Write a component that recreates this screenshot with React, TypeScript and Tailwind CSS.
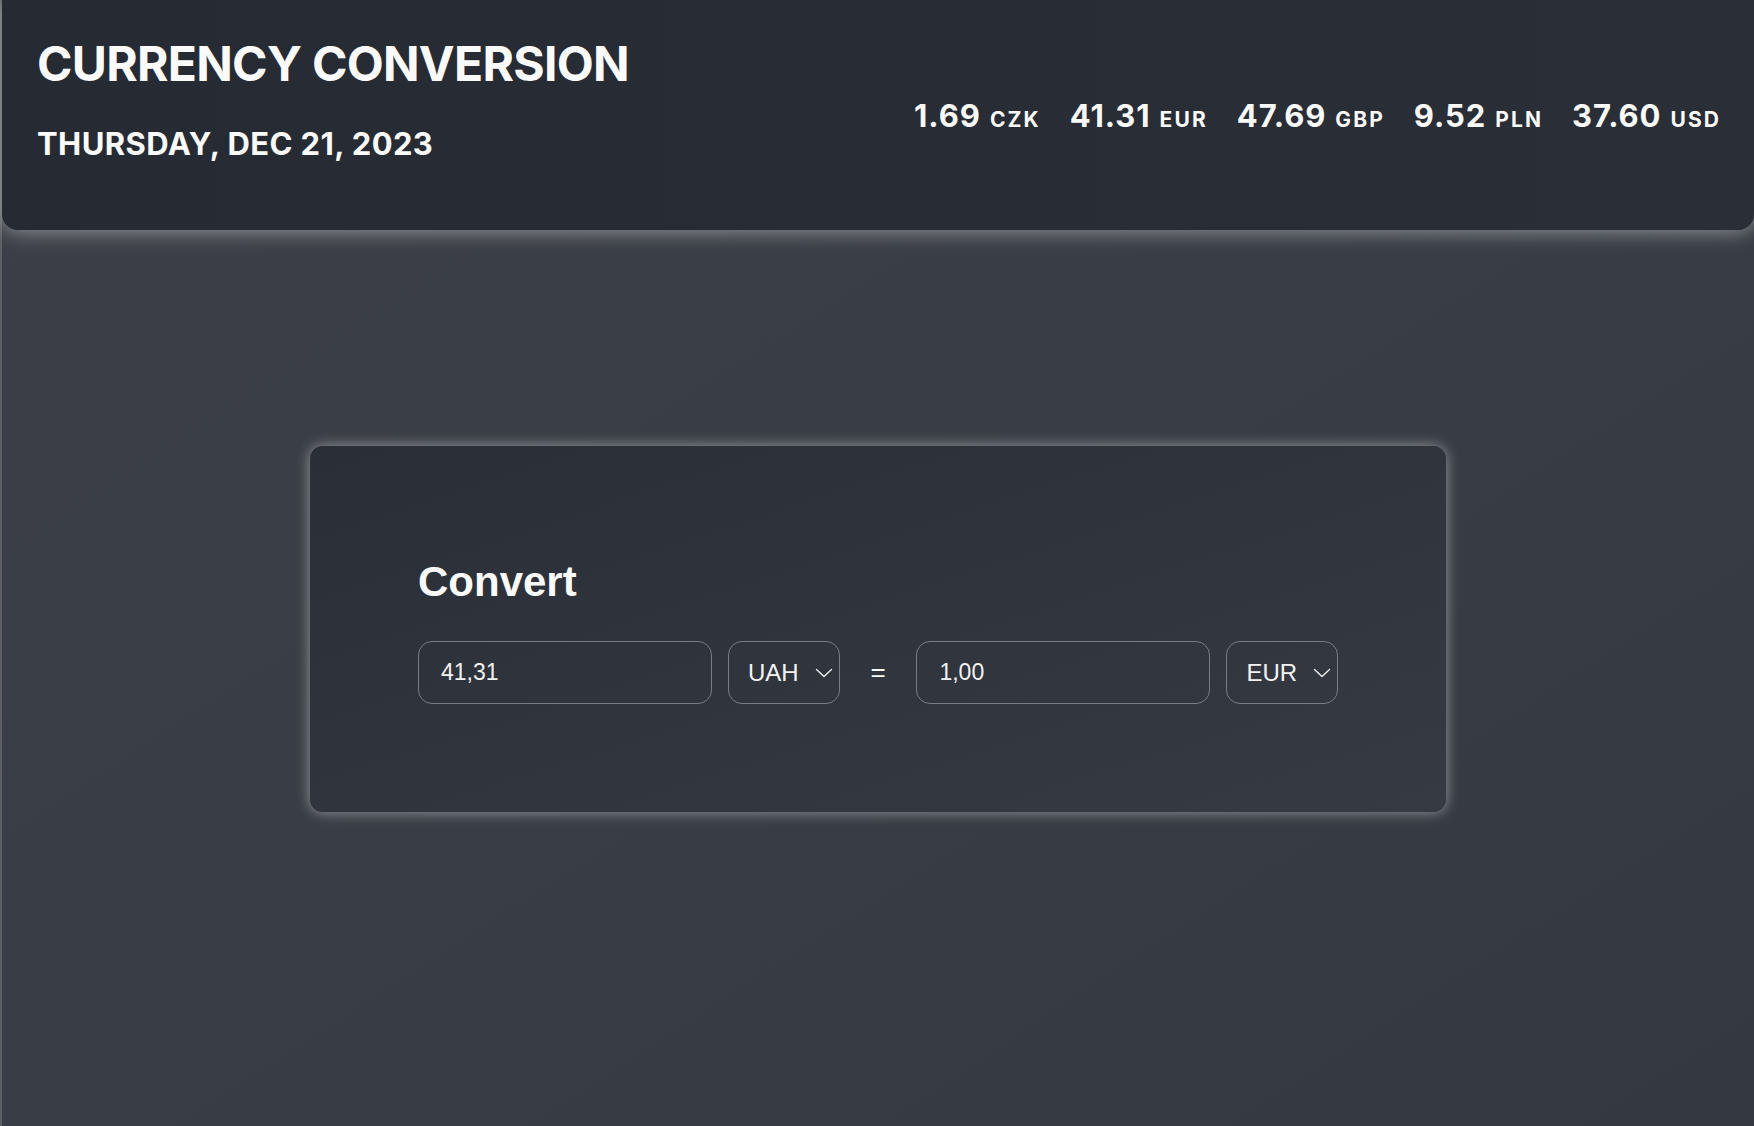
import React from "react";

const rates = [
  { value: "1.69", code: "CZK" },
  { value: "41.31", code: "EUR" },
  { value: "47.69", code: "GBP" },
  { value: "9.52", code: "PLN" },
  { value: "37.60", code: "USD" },
];

const Chevron = () => (
  <svg width="18" height="10" viewBox="0 0 18 10" fill="none" className="shrink-0">
    <polyline points="1.5,1.5 9,8.5 16.5,1.5" stroke="#f1f1f1" strokeWidth="1.4" strokeLinecap="round" strokeLinejoin="round" />
  </svg>
);

const Select = ({ label }: { label: string }) => (
  <div className="flex h-[63px] w-[112px] items-center justify-between rounded-[14px] border border-[#7b7d83] pl-[19px] pr-[6px] text-[24px] text-[#f3f3f3]">
    <span>{label}</span>
    <Chevron />
  </div>
);

const Amount = ({ value }: { value: string }) => (
  <input
    readOnly
    value={value}
    className="h-[63px] w-[294px] rounded-[14px] border border-[#7b7d83] bg-transparent px-[22px] text-[23px] text-[#f3f3f3] outline-none"
  />
);

const App = () => {
  return (
    <div className="min-h-screen w-full border-l-2 border-[#5b5e63] bg-gradient-to-br from-[#3c3f47] via-[#393d45] to-[#343840]">
      <header className="flex h-[230px] items-center justify-between rounded-b-[16px] bg-gradient-to-r from-[#262a32] to-[#2a2e36] pl-[35px] pr-[33px] font-['Inter',sans-serif] text-[#fafafa] shadow-[0_0_22px_rgba(225,226,230,0.6)]">
        <div className="self-start pt-[40px]">
          <h1 className="text-[48px] font-bold leading-none tracking-[-0.015em]">CURRENCY CONVERSION</h1>
          <h2 className="mt-[40px] text-[31px] font-bold leading-none tracking-[0.4px]">THURSDAY, DEC 21, 2023</h2>
        </div>
        <div className="flex items-baseline gap-[29px]">
          {rates.map((r) => (
            <div key={r.code} className="flex items-baseline gap-[9px] font-bold">
              <span className="text-[31px] leading-none tracking-[0.03em]">{r.value}</span>
              <span className="text-[21px] leading-none tracking-[0.1em]">{r.code}</span>
            </div>
          ))}
        </div>
      </header>

      <main className="flex justify-center pt-[216px] pb-10">
        <section className="w-[1136px] rounded-[13px] bg-gradient-to-br from-[#2a2e36] to-[#363a42] p-[108px] font-['Liberation_Sans',Arial,sans-serif] text-[#fafafa] shadow-[0_0_14px_rgba(215,216,220,0.6)]">
          <h3 className="mb-[31px] text-[42px] font-bold leading-[56px]">Convert</h3>
          <div className="flex items-center gap-4">
            <Amount value="41,31" />
            <Select label="UAH" />
            <span className="w-[45px] text-center text-[26px]">=</span>
            <Amount value="1,00" />
            <Select label="EUR" />
          </div>
        </section>
      </main>
    </div>
  );
};

export default App;
